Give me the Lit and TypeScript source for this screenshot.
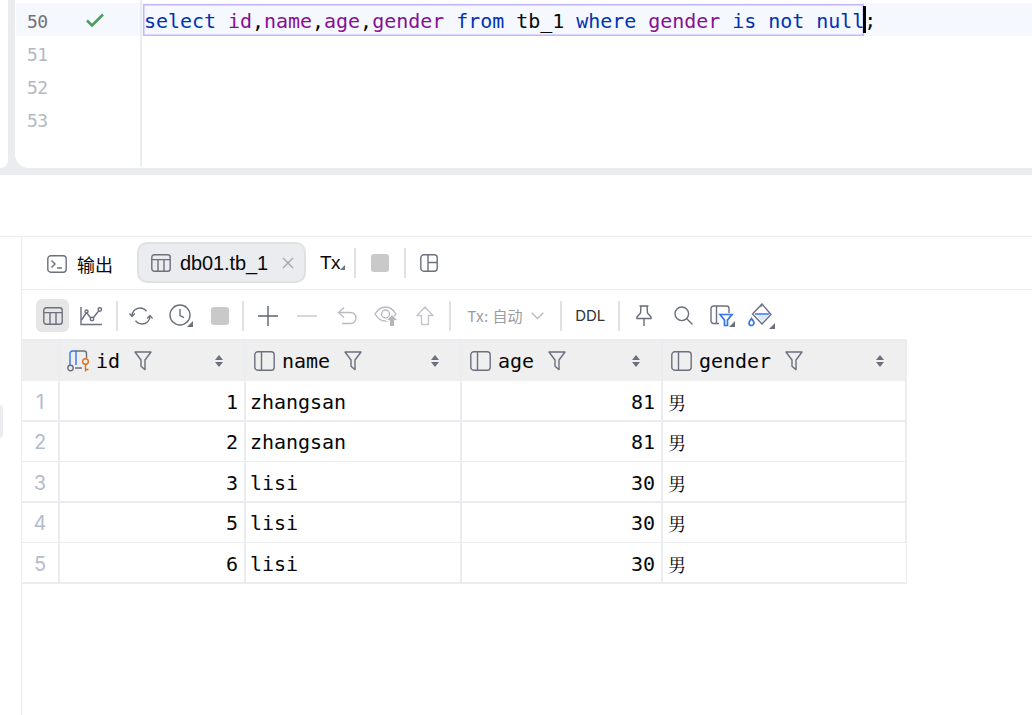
import { LitElement, html, css, svg } from "lit";
import { customElement } from "lit/decorators.js";

const G = "#6c707e";
const ico = (w: number, h: number, body: unknown, cls = "") =>
  html`<svg class="ico ${cls}" width=${w} height=${h} viewBox="0 0 ${w} ${h}" fill="none" stroke=${G} stroke-width="1.4">${body}</svg>`;

const tableIcon = () => ico(20, 18, svg`<rect x=".8" y=".8" width="18.4" height="16.4" rx="2.5"/><path d="M1 5.6h18M7 5.6V17M13 5.6V17"/>`);
const colIcon = () => ico(21, 20, svg`<rect x=".8" y=".8" width="19.4" height="18.4" rx="3"/><path d="M7.5 1v18"/>`);
const funnel = () => ico(18, 20, svg`<path d="M1 1h16l-6 8v9.6l-4-3.4V9z" stroke-linejoin="round"/>`);
const sort = () => html`<svg class="ico sort" width="8" height="12" viewBox="0 0 8 12"><path d="M4 0l4 5H0zM4 12l4-5H0z" fill=${G}/></svg>`;

const idIcon = () => html`<svg class="ico" width="23" height="22" viewBox="0 0 23 22" fill="none" stroke-width="1.4">
  <path d="M3 15V3.5C3 2 4 1 5.5 1H9v14" stroke="#3574f0"/>
  <path d="M9 1h8c1.600 0 2.500 1 2.500 2.500V8M8 18h7" stroke=${G}/>
  <circle cx="3.500" cy="18" r="2.700" stroke=${G}/>
  <circle cx="18.500" cy="11.500" r="2.800" stroke="#e66d17"/>
  <path d="M18.500 14.500V21.500M18.500 19.500h3" stroke="#e66d17"/>
</svg>`;

const icons = {
  console: () => ico(20, 18, svg`<rect x=".8" y=".8" width="18.4" height="16.4" rx="3"/><path d="M4.500 5.500L8 9l-3.500 3.500M10 13h5"/>`),
  layout: () => ico(18, 18, svg`<rect x=".8" y=".8" width="16.4" height="16.4" rx="3"/><path d="M8 1v16M8 8.500h9.500"/>`),
  close: () => ico(12, 12, svg`<path d="M1 1l10 10M11 1L1 11" stroke="#a3a5ab" stroke-width="1.300"/>`),
  chart: () => ico(23, 20, svg`<path d="M1 1v17.500h21"/><path d="M1.500 14L6.500 6.500l5.500 7L19 4.500" /><circle cx="6.500" cy="5.500" r="1.500" fill="#fff"/><circle cx="12" cy="13" r="1.700" fill="#fff"/><circle cx="19.800" cy="3.500" r="1.700" fill="#fff"/>`),
  refresh: () => ico(24, 22, svg`<path d="M3 11c0-4.500 3.500-8 8-8 2.800 0 5 1.200 6.500 3.300"/><path d="M21 11c0 4.500-3.500 8-8 8-2.800 0-5-1.200-6.500-3.300"/><path d="M.5 8.500l2.500 3 2.800-3M18.200 13.500l2.800-3 2.600 3"/>`),
  clock: () => html`<svg class="ico" width="24" height="23" viewBox="0 0 24 23" fill="none" stroke=${G} stroke-width="1.4"><circle cx="11" cy="11" r="10"/><path d="M11 5v6.500l4 2.200"/><path d="M24 17v6h-6z" fill=${G} stroke="none"/></svg>`,
  plus: () => ico(20, 20, svg`<path d="M10 0v20M0 10h20" stroke="#5f6370"/>`),
  minus: () => ico(20, 20, svg`<path d="M0 10h20" stroke="#c4c6cc"/>`),
  undo: () => ico(20, 20, svg`<path d="M7 1.500L1.500 6.500 7 11.500" stroke="#b9bbc1"/><path d="M2 6.500h11.500a5.500 5.500 0 0 1 0 11H5" stroke="#b9bbc1"/>`),
  eye: () => html`<svg class="ico" width="25" height="22" viewBox="0 0 25 22" fill="none" stroke="#b9bbc1" stroke-width="1.4"><path d="M1 9c3-5 7-7 10.500-7S19 4 22 9c-3 5-6 7-10.500 7S4 14 1 9z"/><circle cx="11.500" cy="9" r="4"/><path d="M18 9.500l6 6h-3.500V21.500h-5v-6H12z" fill="#b3b5ba" stroke="#fff" stroke-width="1"/></svg>`,
  up: () => ico(18, 20, svg`<path d="M9 1L1 9.500h4.500v9h7v-9H17z" stroke="#c4c6cc" stroke-linejoin="round"/>`),
  chev: () => ico(13, 8, svg`<path d="M.7.700l5.800 5.800L12.300.700" stroke="#b9bbc1"/>`),
  pin: () => ico(16, 22, svg`<path d="M3.500 1h9M5 1l-.5 7L1 12v1.500h14V12l-3.500-4L11 1M8 13.500V21" stroke="#686c78"/>`),
  search: () => ico(19, 19, svg`<circle cx="7.800" cy="7.800" r="6.800"/><path d="M12.800 12.800L18.500 18.500"/>`),
  filter: () => html`<svg class="ico" width="25" height="22" viewBox="0 0 25 22" fill="none" stroke=${G} stroke-width="1.4"><path d="M9 18.500H3.500C2 18.500 1 17.500 1 16V3.500C1 2 2 1 3.500 1h13C18 1 19 2 19 3.500V8M6.500 1v17.500"/><path d="M10 9.500h12l-4.500 5.500v5.500h-3V15z" stroke="#3574f0" stroke-width="1.700"/><path d="M25 16v6h-6z" fill=${G} stroke="none"/></svg>`,
  paint: () => html`<svg class="ico" width="27" height="26" viewBox="0 0 27 26" fill="none" stroke=${G} stroke-width="1.4"><path d="M14 1L4.500 11l9.500 10 9-9.500z"/><path d="M14 1l-1.500 3" /><path d="M7 11h14" stroke="#3574f0" stroke-width="1.500"/><path d="M8 12l6 7 7-7z" fill="#dce7fb" stroke="none"/><path d="M3.500 15.500c-1.300 2-2.500 3-2.500 4.500a2.500 2.500 0 0 0 5 0c0-1.500-1.200-2.500-2.500-4.500z" stroke="#3574f0" stroke-width="1.700"/><path d="M27 20v6h-6z" fill=${G} stroke="none"/></svg>`,
};

const stop = () => html`<span class="stop"></span>`;
const slot = (c: unknown, cls = "") => html`<span class="slot ${cls}"><span class="inner">${c}</span></span>`;

type Col = { n: string; pk?: boolean };
const cols: Col[] = [{ n: "id", pk: true }, { n: "name" }, { n: "age" }, { n: "gender" }];
const rows = [
  ["1", "zhangsan", "81", "男"],
  ["2", "zhangsan", "81", "男"],
  ["3", "lisi", "30", "男"],
  ["5", "lisi", "30", "男"],
  ["6", "lisi", "30", "男"],
];

@customElement("app-root")
export class AppRoot extends LitElement {
  static styles = css`
    :host { display: block; width: 1032px; height: 715px; overflow: hidden; background: #fff; position: relative; }
    * { box-sizing: border-box; }
    .ico { display: block; flex: none; }
    .top { display: flex; height: 175px; background: #ebecf0; padding-bottom: 7px; }
    .stub { width: 8px; background: #fff; border-bottom-right-radius: 8px; margin-right: 7px; }
    .editor { flex: 1; display: flex; background: #fff; border-bottom-left-radius: 14px; overflow: hidden; }
    .gutter { width: 127px; padding: 3px 0 0 1px; border-right: 2px solid #ebecf0; margin-bottom: 2px; }
    .gl { height: 33px; display: flex; align-items: center; padding: 4px 0 0 11px; color: #b4b8c2;
      font: 18px/1 "DejaVu Sans Mono", monospace; letter-spacing: -.03em; }
    .gl.on { background: #f5f8fe; color: #6f737a; }
    .check { margin: -3px 0 0 38px; }
    .code { flex: 1; padding-top: 3px; }
    .cl { height: 33px; background: #f5f8fe; padding-left: 1px; display: flex; align-items: center;
      font: 20px/1 "DejaVu Sans Mono", monospace; letter-spacing: -.04px; white-space: pre; color: #080808; }
    .sel { display: flex; align-items: center; height: 32px; margin-top: 1px; padding-left: 1px; box-shadow: inset 0 0 0 1.500px #c4b7fb; }
    .t { padding-top: 1px; }
    .k { color: #0033b3; }
    .p { color: #871094; }
    .caret { width: 3px; height: 27px; background: #000; margin: 0 -2px 0 -1px; flex: none; }

    .bottom { display: flex; height: 540px; }
    .side { width: 22px; border-right: 1px solid #ebecf0; padding-top: 168px; border-top: 1px solid #ebecf0; margin-top: 61px; }
    .grip { display: block; width: 3px; height: 33px; background: #ebecf0; border-radius: 0 3px 3px 0; }
    .main { flex: 1; display: flex; flex-direction: column; padding-top: 61px; }
    .tabs { height: 54px; border-top: 1px solid #ebecf0; border-bottom: 1px solid #ebecf0; display: flex; align-items: center; padding: 0 0 0 25px; color: #080808; flex: none; }
    .tab-out { display: flex; align-items: center; gap: 10px; padding-top: 1px; font: 18px "Noto Sans CJK SC", sans-serif; width: 90px; }
    .tab { width: 169px; height: 41px; margin-bottom: 1px; display: flex; align-items: center; padding-left: 12px; background: #ebecf0; border: 2px solid #dfe1e5; border-radius: 10px; font: 20px "Liberation Sans", Arial, sans-serif; }
    .tab .nm { margin-left: 9px; width: 102px; padding-top: 1px; letter-spacing: -.1px; }
    .tx { position: relative; margin-left: 14px; width: 25px; font: 19px "Liberation Sans", sans-serif; letter-spacing: -.6px; }
    .tx::after { content: ""; position: absolute; left: 20px; bottom: 4px; width: 0; height: 0; border-left: 5px solid transparent; border-bottom: 5px solid #6c707e; }
    .sep { width: 2px; height: 30px; background: #dfe1e5; flex: none; }
    .tabs .sep.a { margin: 0 15px 0 9px; }
    .tabs .sep.b { margin: 0 14px 0 15px; }
    .stop { display: block; width: 18px; height: 18px; border-radius: 3px; background: #c9c9c9; flex: none; }

    .tools { height: 49px; display: flex; align-items: center; padding: 2px 0 0 11px; flex: none; }
    .slot { width: 39.300px; height: 33px; display: flex; align-items: center; justify-content: center; flex: none; }
    .inner { height: 33px; min-width: 33px; display: flex; align-items: center; justify-content: center; border-radius: 6px; }
    .slot.active .inner { background: #e6e6e6; }
    .tools .sep { margin: 0 4px; }
    .tools .sep.second { margin-left: 3px; }
    .txa { width: 101.300px; padding-left: 12px; display: flex; align-items: center; color: #9a9ca3; font: 15px "Inter", "Noto Sans CJK SC", sans-serif; flex: none; }
    .txa span { width: 64px; white-space: nowrap; }
    .ddl { width: 48px; text-align: center; font: 15px "Inter", sans-serif; color: #303136; flex: none; }

    .table { width: 885px; display: grid; grid-template-columns: 38px 186px 216px 201px 244px; border-top: 2px solid #ebecf0; flex: none; }
    .h { height: 40px; background: #efefef; display: flex; align-items: center; border-right: 2px solid #ebecf0; padding-left: 8px; font: 20px "DejaVu Sans Mono", monospace; letter-spacing: -.04px; color: #080808; }
    .h.pk { padding-left: 7px; }
    .h:last-child, .c:last-child { border-right-width: 1px; }
    .hn { margin: 0 14px 0 7px; }
    .pk .hn { margin-left: 6px; margin-right: 14px; }
    .h .sort { margin-left: auto; margin-right: 21px; }
    .c { height: 40px; display: flex; align-items: center; border-right: 2px solid #ebecf0; border-bottom: 1px solid #ebecf0; padding: 1px 6px 0 4px; font: 20px "DejaVu Sans Mono", monospace; letter-spacing: -.04px; color: #080808; }
    .c.th { height: 41px; border-bottom-width: 2px; padding-top: 2px; }
    .c.num { justify-content: flex-end; }
    .c.rn { justify-content: center; color: #b4bccd; font: 20px "Inter", sans-serif; padding-left: 0; padding-right: 0; }
    .c.cjk { padding-left: 5px; font: 18px "Noto Serif CJK SC", "Liberation Serif", serif; }
    .h.rn { padding: 0; }
  `;

  render() {
    return html`
      <div class="top">
        <div class="stub"></div>
        <div class="editor">
          <div class="gutter">
            <div class="gl on">50
              <svg class="ico check" width="18" height="14" viewBox="0 0 18 14" fill="none" stroke="#4a9f5f" stroke-width="2.600"><path d="M1 7.500l5 5L17 1.500"/></svg>
            </div>
            <div class="gl">51</div>
            <div class="gl">52</div>
            <div class="gl">53</div>
          </div>
          <div class="code">
            <div class="cl">
              <span class="sel"><span class="t"><span class="k">select</span> <span class="p">id</span>,<span class="p">name</span>,<span class="p">age</span>,<span class="p">gender</span> <span class="k">from</span> tb_1 <span class="k">where</span> <span class="p">gender</span> <span class="k">is not null</span></span></span><span class="caret"></span><span class="t">;</span>
            </div>
          </div>
        </div>
      </div>
      <div class="bottom">
        <div class="side"><span class="grip"></span></div>
        <div class="main">
          <div class="tabs">
            <div class="tab-out">${icons.console()}<span>输出</span></div>
            <div class="tab">${tableIcon()}<span class="nm">db01.tb_1</span>${icons.close()}</div>
            <span class="tx">Tx</span>
            <span class="sep a"></span>${stop()}<span class="sep b"></span>${icons.layout()}
          </div>
          <div class="tools">
            ${slot(tableIcon(), "active")}${slot(icons.chart())}<span class="sep"></span>
            ${slot(icons.refresh())}${slot(icons.clock())}${slot(stop())}<span class="sep second"></span>
            ${slot(icons.plus())}${slot(icons.minus())}${slot(icons.undo())}${slot(icons.eye())}${slot(icons.up())}<span class="sep"></span>
            <div class="txa"><span>Tx: 自动</span>${icons.chev()}</div><span class="sep"></span>
            <div class="ddl">DDL</div><span class="sep"></span>
            ${slot(icons.pin())}${slot(icons.search())}${slot(icons.filter())}${slot(icons.paint())}
          </div>
          <div class="table">
            <div class="h rn"></div>
            ${cols.map((c) => html`<div class="h ${c.pk ? "pk" : ""}">${c.pk ? idIcon() : colIcon()}<span class="hn">${c.n}</span>${funnel()}${sort()}</div>`)}
            ${rows.map((r, i) => {
              const th = i % 2 === 0 ? "th" : "";
              return html`<div class="c rn ${th}">${i + 1}</div>
                <div class="c num ${th}">${r[0]}</div>
                <div class="c ${th}">${r[1]}</div>
                <div class="c num ${th}">${r[2]}</div>
                <div class="c cjk ${th}">${r[3]}</div>`;
            })}
          </div>
        </div>
      </div>
    `;
  }
}
